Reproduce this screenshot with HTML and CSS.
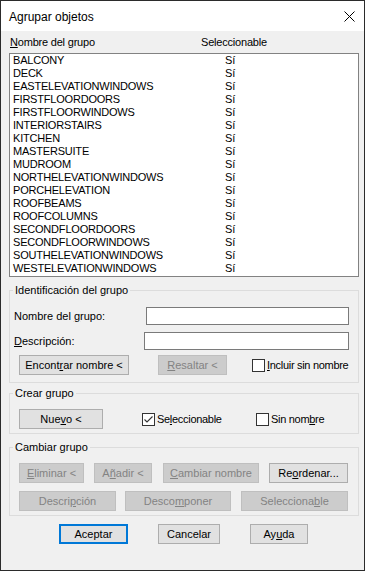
FILE: index.html
```html
<!DOCTYPE html>
<html>
<head>
    <title>Agrupar objetos</title>
    <meta name="viewport" content="width=device-width, initial-scale=1.0">
    <link rel="stylesheet" href="styles.css">
</head>
<body>
    <div class="window">
        <div class="titlebar">
            <span class="title">Agrupar objetos</span>
            <svg class="close" width="11" height="11" viewBox="0 0 11 11">
                <path d="M0.5 0.5 L10.5 10.5 M10.5 0.5 L0.5 10.5" stroke="#000" stroke-width="1" fill="none"/>
            </svg>
        </div>

        <div class="content">
            <!-- Group list -->
            <div class="list-head">
                <span class="head-name"><u>N</u>ombre del grupo</span>
                <span>Seleccionable</span>
            </div>
            <div class="list">
                <div class="row"><span class="name">BALCONY</span><span>Sí</span></div>
                <div class="row"><span class="name">DECK</span><span>Sí</span></div>
                <div class="row"><span class="name">EASTELEVATIONWINDOWS</span><span>Sí</span></div>
                <div class="row"><span class="name">FIRSTFLOORDOORS</span><span>Sí</span></div>
                <div class="row"><span class="name">FIRSTFLOORWINDOWS</span><span>Sí</span></div>
                <div class="row"><span class="name">INTERIORSTAIRS</span><span>Sí</span></div>
                <div class="row"><span class="name">KITCHEN</span><span>Sí</span></div>
                <div class="row"><span class="name">MASTERSUITE</span><span>Sí</span></div>
                <div class="row"><span class="name">MUDROOM</span><span>Sí</span></div>
                <div class="row"><span class="name">NORTHELEVATIONWINDOWS</span><span>Sí</span></div>
                <div class="row"><span class="name">PORCHELEVATION</span><span>Sí</span></div>
                <div class="row"><span class="name">ROOFBEAMS</span><span>Sí</span></div>
                <div class="row"><span class="name">ROOFCOLUMNS</span><span>Sí</span></div>
                <div class="row"><span class="name">SECONDFLOORDOORS</span><span>Sí</span></div>
                <div class="row"><span class="name">SECONDFLOORWINDOWS</span><span>Sí</span></div>
                <div class="row"><span class="name">SOUTHELEVATIONWINDOWS</span><span>Sí</span></div>
                <div class="row"><span class="name">WESTELEVATIONWINDOWS</span><span>Sí</span></div>
            </div>

            <!-- Identificación del grupo -->
            <div class="group group-id">
                <div class="group-title">Identificación del grupo</div>
                <div class="field field-name">
                    <span class="label">Nombre del <u>g</u>rupo:</span>
                    <span class="input"></span>
                </div>
                <div class="field field-desc">
                    <span class="label"><u>D</u>escripción:</span>
                    <span class="input"></span>
                </div>
                <div class="btn-row row-find">
                    <span class="btn btn-find">Encont<u>r</u>ar nombre &lt;</span>
                    <span class="btn disabled btn-highlight"><u>R</u>esaltar &lt;</span>
                    <span class="check check-unnamed"><span class="box"></span><span><u>I</u>ncluir sin nombre</span></span>
                </div>
            </div>

            <!-- Crear grupo -->
            <div class="group group-create">
                <div class="group-title">Crear grupo</div>
                <div class="btn-row row-create">
                    <span class="btn btn-new">Nue<u>v</u>o &lt;</span>
                    <span class="check check-sel">
                        <span class="box">
                            <svg width="11" height="11" viewBox="0 0 11 11">
                                <path d="M1.5 5.5 L4 8 L9.5 2.5" stroke="#333" stroke-width="1.1" fill="none"/>
                            </svg>
                        </span>
                        <span>Se<u>l</u>eccionable</span>
                    </span>
                    <span class="check"><span class="box"></span><span>Sin nom<u>b</u>re</span></span>
                </div>
            </div>

            <!-- Cambiar grupo -->
            <div class="group group-change">
                <div class="group-title">Cambiar grupo</div>
                <div class="btn-row row-change-1">
                    <span class="btn disabled btn-remove"><u>E</u>liminar &lt;</span>
                    <span class="btn disabled btn-add">A<u>ñ</u>adir &lt;</span>
                    <span class="btn disabled btn-rename"><u>C</u>ambiar nombre</span>
                    <span class="btn btn-reorder">Re<u>o</u>rdenar...</span>
                </div>
                <div class="btn-row row-change-2">
                    <span class="btn disabled btn-desc">Descri<u>p</u>ción</span>
                    <span class="btn disabled btn-explode">Desco<u>m</u>poner</span>
                    <span class="btn disabled btn-selectable">Selecciona<u>b</u>le</span>
                </div>
            </div>

            <div class="actions">
                <span class="btn btn-ok">Aceptar</span>
                <span class="btn btn-cancel">Cancelar</span>
                <span class="btn btn-help">Ay<u>u</u>da</span>
            </div>
        </div>
    </div>
</body>
</html>
```

FILE: styles.css
```css
body {
    margin: 0;
    font-family: "Liberation Sans", Arial, sans-serif;
    font-size: 11px;
    color: #000;
}

u {
    text-underline-offset: 1px;
}

.window {
    width: 365px;
    height: 571px;
    box-sizing: border-box;
    border: 1px solid #2b2b2b;
    background-color: #f0f0f0;
}

/* Title bar */
.titlebar {
    height: 30px;
    background-color: #fff;
    display: flex;
    align-items: center;
    padding-left: 8px;
}

.title {
    font-size: 12px;
    line-height: 14px;
    margin-top: 1px;
}

.close {
    margin-left: auto;
    margin-right: 9px;
    margin-top: 1px;
}

.content {
    padding-left: 8px;
}

/* List */
.list-head {
    display: flex;
    height: 22px;
    box-sizing: border-box;
    padding: 5px 0 0 1px;
    line-height: 13px;
    letter-spacing: -0.2px;
}

.head-name {
    width: 191px;
}

.list {
    width: 350px;
    height: 224px;
    box-sizing: border-box;
    border: 1px solid #828282;
    background-color: #fff;
    padding-left: 3px;
}

.row {
    display: flex;
    line-height: 13px;
}

.row .name {
    width: 212px;
    letter-spacing: -0.2px;
}

/* Group boxes */
.group {
    width: 350px;
    box-sizing: border-box;
    border: 1px solid #dcdcdc;
    padding: 0 0 4px 4px;
}

.group-title {
    width: max-content;
    margin: -7px 0 0 -1px;
    padding: 0 2px;
    line-height: 13px;
    background-color: #f0f0f0;
}

.group-id {
    margin-top: 13px;
    padding-bottom: 7px;
}

.group-create {
    margin-top: 10px;
}

.group-change {
    margin-top: 13px;
}

.field {
    display: flex;
    align-items: center;
    height: 18px;
}

.field-name {
    margin-top: 10px;
}

.field-name .label {
    width: 132px;
}

.field-name .input {
    width: 203px;
}

.field-desc {
    margin-top: 7px;
}

.field-desc .label {
    width: 130px;
}

.field-desc .input {
    width: 205px;
}

.input {
    height: 18px;
    box-sizing: border-box;
    border: 1px solid #7a7a7a;
    background-color: #fff;
}

/* Buttons */
.btn-row {
    display: flex;
    align-items: center;
    height: 20px;
}

.btn {
    height: 20px;
    box-sizing: border-box;
    display: flex;
    align-items: center;
    justify-content: center;
    border: 1px solid #adadad;
    background-color: #e1e1e1;
    line-height: 13px;
    white-space: nowrap;
}

.btn.disabled {
    border-color: #bfbfbf;
    background-color: #cccccc;
    color: #838383;
}

.row-find {
    margin-top: 5px;
}

.btn-find {
    margin-left: 5px;
    width: 110px;
}

.btn-highlight {
    margin-left: 29px;
    width: 69px;
}

.check-unnamed {
    margin-left: 25px;
}

.row-create {
    margin-top: 9px;
}

.btn-new {
    margin-left: 5px;
    width: 84px;
}

.check-sel {
    margin-left: 39px;
    width: 114px;
}

/* Checkboxes */
.check {
    display: flex;
    align-items: center;
    line-height: 13px;
    letter-spacing: -0.3px;
}

.box {
    width: 13px;
    height: 13px;
    box-sizing: border-box;
    border: 1px solid #333;
    background-color: #fff;
    margin-right: 2px;
    display: flex;
    align-items: center;
    justify-content: center;
}

.row-change-1 {
    margin-top: 9px;
}

.row-change-2 {
    margin-top: 8px;
}

.btn-remove {
    margin-left: 5px;
    width: 65px;
}

.btn-add {
    margin-left: 10px;
    width: 58px;
}

.btn-rename {
    margin-left: 11px;
    width: 96px;
}

.btn-reorder {
    margin-left: 10px;
    width: 79px;
}

.btn-desc {
    margin-left: 5px;
    width: 97px;
}

.btn-explode {
    margin-left: 9px;
    width: 106px;
}

.btn-selectable {
    margin-left: 10px;
    width: 107px;
}

/* Bottom buttons */
.actions {
    display: flex;
    margin-top: 8px;
}

.btn-ok {
    margin-left: 50px;
    width: 69px;
    border: 2px solid #0078d7;
}

.btn-cancel {
    margin-left: 30px;
    width: 62px;
}

.btn-help {
    margin-left: 30px;
    width: 58px;
}
```
